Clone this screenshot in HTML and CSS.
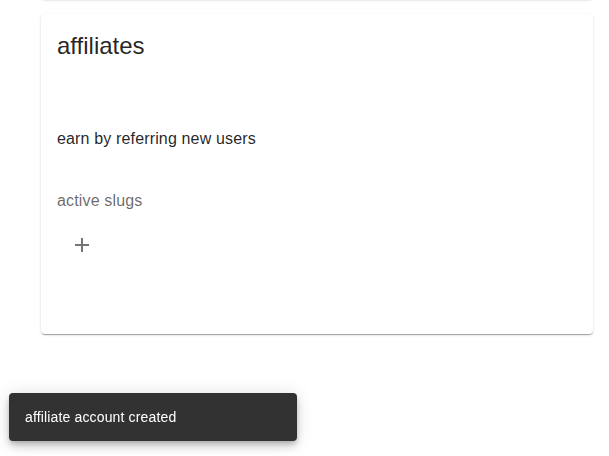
FILE: index.html
```html
<!DOCTYPE html>
<html>
<head>
<meta charset="utf-8">
<link rel="stylesheet" href="styles.css">
</head>
<body>
<main class="content">
  <div class="card prev-card"></div>
  <section class="card">
    <h2 class="title">affiliates</h2>
    <p class="desc">earn by referring new users</p>
    <h3 class="subtitle">active slugs</h3>
    <button class="icon-btn" aria-label="add">
      <svg viewBox="0 0 24 24" width="24" height="24"><path d="M19 13h-6v6h-2v-6H5v-2h6V5h2v6h6v2z" fill="currentColor"/></svg>
    </button>
  </section>
</main>
<div class="snackbar">affiliate account created</div>
</body>
</html>
```

FILE: styles.css
```css
html, body {
  margin: 0;
  padding: 0;
  background: #fff;
  font-family: "Liberation Sans", Arial, sans-serif;
  color: rgba(0,0,0,0.87);
  overflow: hidden;
  height: 456px;
}
.content {
  padding: 0 16px 0 41px;
  display: flex;
  flex-direction: column;
}
.card {
  background: #fff;
  border-radius: 4px;
  box-shadow: 0 2px 1px -1px rgba(0,0,0,0.2), 0 1px 1px 0 rgba(0,0,0,0.14), 0 1px 3px 0 rgba(0,0,0,0.12);
}
.prev-card {
  height: 40px;
  margin-top: -41px;
  margin-bottom: 15px;
}
section.card {
  padding: 16px 16px 24px;
  height: 280px;
}
.title {
  margin: 0;
  font-size: 24px;
  font-weight: 400;
  line-height: 32px;
}
.desc {
  margin: 65px 0 0;
  font-size: 16px;
  line-height: 24px;
  letter-spacing: 0.15px;
}
.subtitle {
  margin: 38px 0 0;
  font-size: 16px;
  font-weight: 400;
  line-height: 24px;
  letter-spacing: 0.15px;
  color: rgba(0,0,0,0.6);
}
.icon-btn {
  margin: 8px 0 0 1px;
  width: 48px;
  height: 48px;
  padding: 12px;
  border: 0;
  background: transparent;
  color: rgba(0,0,0,0.54);
  display: flex;
  align-items: center;
  justify-content: center;
  border-radius: 50%;
}
.icon-btn svg { display: block; }
.snackbar {
  position: fixed;
  left: 9px;
  top: 393px;
  width: 288px;
  height: 48px;
  box-sizing: border-box;
  padding: 0 16px;
  display: flex;
  align-items: center;
  background: #323232;
  color: #fff;
  font-size: 14px;
  letter-spacing: 0.15px;
  border-radius: 4px;
  box-shadow: 0 3px 5px -1px rgba(0,0,0,0.2), 0 6px 10px 0 rgba(0,0,0,0.14), 0 1px 18px 0 rgba(0,0,0,0.12);
}
```
